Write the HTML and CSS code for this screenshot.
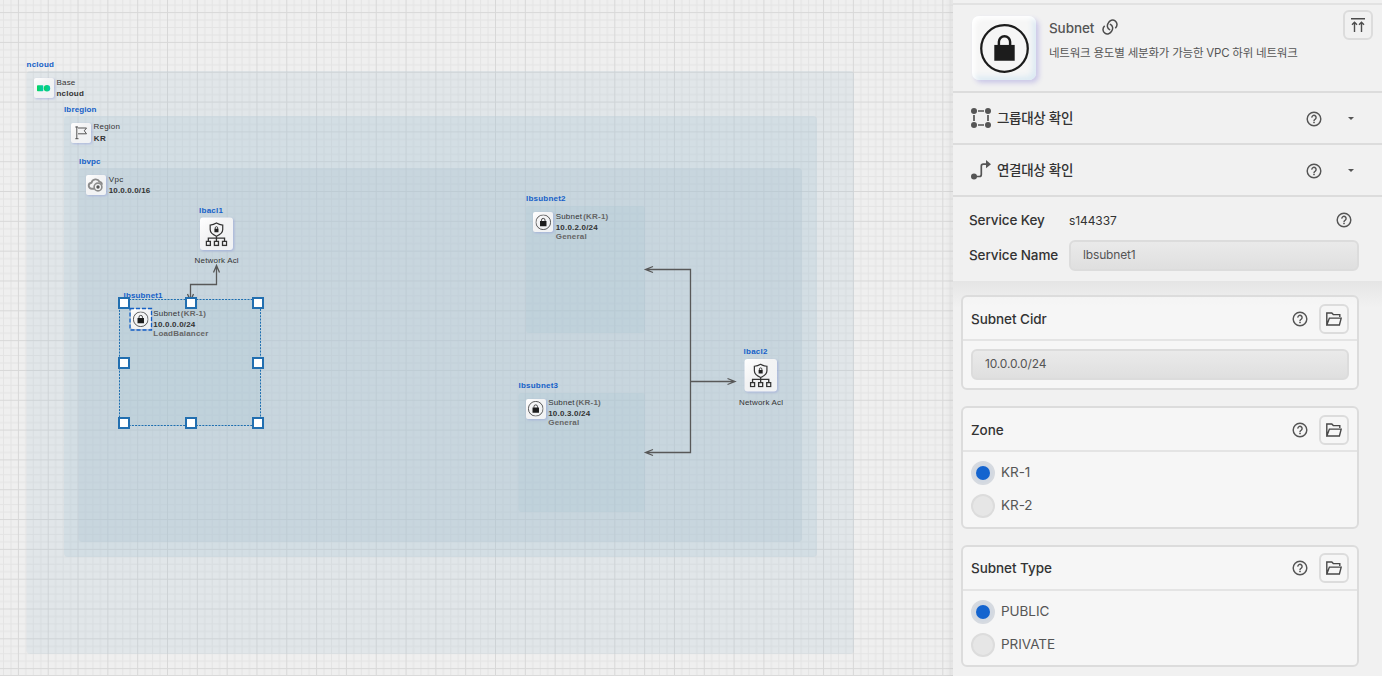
FILE: index.html
```html
<!DOCTYPE html>
<html lang="ko">
<head>
<meta charset="utf-8">
<title>Subnet</title>
<link rel="stylesheet" href="styles.css">
</head>
<body>
<svg width="0" height="0" class="defs">
  <defs>
    <symbol id="help" viewBox="0 0 16 16">
      <circle cx="8" cy="8" r="6.8" fill="none" stroke="#555" stroke-width="1.45"/>
      <path d="M5.9 6.6a2.1 2.1 0 1 1 3.4 1.5C8.500 8.700 8 9 8 9.900" fill="none" stroke="#555" stroke-width="1.45"/>
      <rect x="7.200" y="10.700" width="1.600" height="1.500" fill="#555"/>
    </symbol>
    <symbol id="folder" viewBox="0 0 16 14">
      <path d="M.8 13V1h5l1.500 1.600h6.500V5M.8 13L3.400 6.100H15.200L13.400 13z" fill="none" stroke="#484848" stroke-width="1.400"/>
    </symbol>
    <symbol id="lock" viewBox="0 0 48 48">
      <circle cx="24" cy="24" r="22.800" fill="none" stroke="#1c1c1c" stroke-width="2.200"/>
      <path d="M14 20.500h20V36H14z" fill="#1c1c1c"/>
      <path d="M18.500 21v-3.500a5.500 5.500 0 0 1 11 0V21" fill="none" stroke="#1c1c1c" stroke-width="2.400"/>
    </symbol>
    <symbol id="acl" viewBox="0 0 22 24">
      <path d="M11 1c2 1.300 4 1.900 6.200 2v4.500c0 3-2.200 5-6.200 6.600-4-1.600-6.200-3.600-6.200-6.600V3C7 2.900 9 2.300 11 1z" fill="none" stroke="#333" stroke-width="1.200"/>
      <path d="M9 6.600h4v3.500H9z" fill="#222"/>
      <path d="M9.800 7V5.800a1.200 1.200 0 0 1 2.400 0V7" fill="none" stroke="#222" stroke-width=".8"/>
      <path d="M11 14v5M3 19v-3h16v3M1 19.200h4v4H1zM9 19.200h4v4H9zM17 19.200h4v4h-4z" fill="none" stroke="#333" stroke-width="1.300"/>
    </symbol>
  </defs>
</svg>
<div class="app">
  <main class="canvas">
    <svg width="953" height="676" viewBox="0 0 953 676">
      <defs>
        <pattern id="grid" x="17.900" y="12.100" width="29.820" height="29.820" patternUnits="userSpaceOnUse">
          <path class="minor" d="M7.950 0V29.820M15.400 0V29.820M22.860 0V29.820M0 7.950H29.820M0 15.400H29.820M0 22.860H29.820"/>
          <path class="major" d="M.5 0V29.820M0 .5H29.820"/>
        </pattern>
        <linearGradient id="tile" x2="1" y2="1"><stop offset="0" stop-color="#fff"/><stop offset=".4" stop-color="#f3f3f4"/><stop offset="1" stop-color="#f0f2f4"/></linearGradient>
        <linearGradient id="green"><stop offset="0" stop-color="#05d65b"/><stop offset="1" stop-color="#08c6b2"/></linearGradient>
        <linearGradient id="edge"><stop offset="0" stop-color="#000" stop-opacity="0"/><stop offset="1" stop-color="#000" stop-opacity=".04"/></linearGradient>
      </defs>
      <rect width="953" height="676" fill="#efefef"/>
      <rect width="953" height="676" fill="url(#grid)"/>
      <rect y="675" width="953" height="1" fill="#dadada"/>

      <rect class="base" x="26.500" y="71" width="827.500" height="583" rx="4"/>
      <rect class="region" x="64" y="116" width="753" height="441" rx="4"/>
      <rect class="vpc" x="78.500" y="168" width="723.500" height="374" rx="4"/>
      <rect class="subnet" x="119" y="299" width="142" height="127" rx="2"/>
      <rect class="subnet" x="526" y="206" width="119" height="127" rx="3"/>
      <rect class="subnet" x="518.500" y="393" width="126.500" height="119" rx="3"/>

      <g class="link">
        <path d="M190.500 300V284.500H216.500V266M213.500 272.500L216.500 265.500L219.500 272.500M187.500 294L190.500 301L193.500 294"/>
        <path d="M646 269.500H690.500V452.500H646M690.500 381.500H735M653 266.500L645.500 269.500L653 272.500M653 449.500L645.500 452.500L653 455.500M727.500 378.500L735 381.500L727.500 384.500"/>
      </g>

      <g class="tile">
        <rect x="34" y="78" width="20" height="20" rx="2"/>
        <rect x="71" y="123" width="20" height="20" rx="2"/>
        <rect x="86" y="175" width="20" height="20" rx="2"/>
        <rect x="533" y="212" width="20" height="20" rx="2"/>
        <rect x="526" y="399" width="20" height="20" rx="2"/>
        <rect x="131" y="309" width="20" height="20" rx="2"/>
        <rect x="200" y="217.500" width="33" height="32.500" rx="3"/>
        <rect x="744.500" y="359" width="32.500" height="32.500" rx="3"/>
      </g>
      <rect x="37" y="85.200" width="6.300" height="6" rx=".8" fill="url(#green)"/>
      <circle cx="47" cy="88.200" r="3.200" fill="url(#green)"/>
      <path d="M76.800 126.500V139M75.300 138.700H78.500M75.300 127H78M78 128H86.500L84.300 130.800L86.500 133.800H78" fill="none" stroke="#555" stroke-width="1"/>
      <g fill="none" stroke="#8c8c8c" stroke-width="1.900"><path d="M94 188.700h-2a3 3 0 0 1-.5-6 4.300 4.300 0 0 1 8-1 3.700 3.700 0 0 1 2.700 3"/><circle cx="98" cy="187" r="3.900" stroke-width="1.600"/></g>
      <circle cx="98" cy="187" r="1.700" fill="#555"/>
      <use href="#lock" x="535.500" y="214.500" width="15.500" height="15.500"/>
      <use href="#lock" x="528" y="401" width="15.500" height="15.500"/>
      <use href="#lock" x="133" y="311.500" width="15.500" height="15.500"/>
      <use href="#acl" x="205.300" y="222" width="22.300" height="24.300"/>
      <use href="#acl" x="749.500" y="363.200" width="22.300" height="24.300"/>

      <g class="name">
        <text x="26.500" y="66.800" textLength="27.500">ncloud</text>
        <text x="64" y="111.600" textLength="32.500">lbregion</text>
        <text x="79" y="163.800" textLength="21.500">lbvpc</text>
        <text x="199" y="212.800" textLength="24">lbacl1</text>
        <text x="123.500" y="298" textLength="39">lbsubnet1</text>
        <text x="526" y="200.800" textLength="39.500">lbsubnet2</text>
        <text x="518.500" y="387.900" textLength="39.500">lbsubnet3</text>
        <text x="743.500" y="353.700" textLength="24">lbacl2</text>
      </g>
      <g class="kind">
        <text x="56.500" y="85" textLength="18.800">Base</text>
        <text x="93.500" y="129" textLength="26.500">Region</text>
        <text x="108.700" y="181.800" textLength="14.500">Vpc</text>
        <text x="194.600" y="262.700" textLength="44">Network Acl</text>
        <text x="739" y="404.800" textLength="44">Network Acl</text>
        <text x="153.300" y="316" textLength="52.500">Subnet<tspan class="az" dx="1">(KR-1)</tspan></text>
        <text x="555.700" y="219" textLength="52.500">Subnet<tspan class="az" dx="1">(KR-1)</tspan></text>
        <text x="548.200" y="405" textLength="52.500">Subnet<tspan class="az" dx="1">(KR-1)</tspan></text>
      </g>
      <g class="value">
        <text x="56.500" y="96" textLength="27.300">ncloud</text>
        <text x="93.700" y="140.800" textLength="12">KR</text>
        <text x="108.700" y="193" textLength="41.500">10.0.0.0/16</text>
        <text x="153.300" y="327" textLength="42">10.0.0.0/24</text>
        <text x="555.700" y="230" textLength="42">10.0.2.0/24</text>
        <text x="548.200" y="416" textLength="42">10.0.3.0/24</text>
      </g>
      <g class="use">
        <text x="153.300" y="336" textLength="55">LoadBalancer</text>
        <text x="555.700" y="239" textLength="31">General</text>
        <text x="548.200" y="425" textLength="31">General</text>
      </g>

      <rect x="130" y="308.500" width="21.500" height="21.500" fill="none" stroke="#1560c4" stroke-width="1.300" stroke-dasharray="4 2"/>
      <rect x="119.500" y="299.500" width="141" height="126" fill="none" stroke="#1e6eb0" stroke-width="1" stroke-dasharray="2 1.200"/>
      <g class="handle">
        <rect x="119" y="298" width="10" height="10"/><rect x="186" y="298" width="10" height="10"/><rect x="253" y="298" width="10" height="10"/>
        <rect x="119" y="358" width="10" height="10"/><rect x="253" y="358" width="10" height="10"/>
        <rect x="119" y="418" width="10" height="10"/><rect x="186" y="418" width="10" height="10"/><rect x="253" y="418" width="10" height="10"/>
      </g>
      <rect x="945" width="8" height="676" fill="url(#edge)"/>
    </svg>
  </main>

  <aside class="panel">
    <header class="head">
      <div class="logo"><svg width="49" height="49"><use href="#lock"/></svg></div>
      <div class="about">
        <div class="title">Subnet
          <svg width="16" height="16" viewBox="0 0 16 16" fill="none" stroke="#4c4c4c" stroke-width="1.500" stroke-linecap="round"><path d="M7.600 10.600C5.300 9.400 4.700 6.500 6.200 4.100C7.600 1.300 10.800.2 13.100 1.800C15.400 3.400 15.600 6.600 13.700 8.700"/><path d="M8.400 5.400C10.700 6.600 11.300 9.500 9.800 11.900C8.400 14.700 5.200 15.800 2.900 14.200C.6 12.600.4 9.400 2.300 7.300"/></svg>
        </div>
        <div class="desc">네트워크 용도별 세분화가 가능한 VPC 하위 네트워크</div>
      </div>
      <button class="square"><svg width="14" height="14" viewBox="0 0 14 14" fill="none" stroke="#4c4c4c" stroke-width="1.400"><path d="M0 .7H14M3.500 14V4.500M1 6.800L3.500 4.300L6 6.800M10.500 14V4.500M8 6.800L10.500 4.300L13 6.800"/></svg></button>
    </header>
    <section class="fold">
      <svg width="20" height="20" viewBox="0 0 20 20" fill="#555"><circle cx="3" cy="3" r="3"/><circle cx="17" cy="3" r="3"/><circle cx="3" cy="17" r="3"/><circle cx="17" cy="17" r="3"/><path d="M7 3h6M7 17h6M3 7v6M17 7v6" stroke="#555" stroke-width="1.700"/></svg>
      <span class="fold-name">그룹대상 확인</span>
      <svg class="help" width="16" height="16"><use href="#help"/></svg>
      <i class="caret"></i>
    </section>
    <section class="fold">
      <svg width="20" height="20" viewBox="0 0 20 20" fill="#555"><circle cx="3" cy="16.500" r="3"/><path d="M15 0l5 4.200-5 4z"/><path d="M3 16.500h5.500q1.800 0 1.800-2V6.200q0-2 2-2H16" fill="none" stroke="#555" stroke-width="1.700"/></svg>
      <span class="fold-name">연결대상 확인</span>
      <svg class="help" width="16" height="16"><use href="#help"/></svg>
      <i class="caret"></i>
    </section>
    <section class="service">
      <div class="row key"><span class="label">Service Key</span><span class="key-value">s144337</span><svg class="help" width="16" height="16"><use href="#help"/></svg></div>
      <div class="row"><span class="label">Service Name</span><div class="field">lbsubnet1</div></div>
    </section>
    <div class="cards">
      <section class="card cidr">
        <div class="card-head"><span>Subnet Cidr</span><svg class="help" width="16" height="16"><use href="#help"/></svg><button class="square"><svg width="16" height="14"><use href="#folder"/></svg></button></div>
        <div class="card-body"><div class="field">10.0.0.0/24</div></div>
      </section>
      <section class="card zone">
        <div class="card-head"><span>Zone</span><svg class="help" width="16" height="16"><use href="#help"/></svg><button class="square"><svg width="16" height="14"><use href="#folder"/></svg></button></div>
        <div class="card-body">
          <label class="option"><i class="radio on"></i><span>KR-1</span></label>
          <label class="option"><i class="radio"></i><span>KR-2</span></label>
        </div>
      </section>
      <section class="card type">
        <div class="card-head"><span>Subnet Type</span><svg class="help" width="16" height="16"><use href="#help"/></svg><button class="square"><svg width="16" height="14"><use href="#folder"/></svg></button></div>
        <div class="card-body">
          <label class="option"><i class="radio on"></i><span>PUBLIC</span></label>
          <label class="option"><i class="radio"></i><span>PRIVATE</span></label>
        </div>
      </section>
    </div>
  </aside>
</div>
</body>
</html>
```
FILE: styles.css
```css
* { box-sizing: border-box; }
body { margin: 0; overflow: hidden; font-family: Inter, "Noto Sans CJK KR", sans-serif; color: #333; }
svg { display: block; flex: none; }
.defs { position: absolute; }
.app { display: flex; width: 1382px; height: 676px; }
.canvas { width: 953px; flex: none; }

.minor { stroke: #e4e4e4; stroke-width: 1; fill: none; }
.major { stroke: #d8d8d8; stroke-width: 1; fill: none; }
.base { fill: #a8c1d0; fill-opacity: .2; }
.region { fill: #b0cad9; fill-opacity: .28; }
.vpc { fill: #abc2d1; fill-opacity: .28; }
.subnet { fill: #a2c2d0; fill-opacity: .22; }
.link { fill: none; stroke: #585858; stroke-width: 1.300; }
.tile { fill: url(#tile); filter: drop-shadow(1px 1px 1px rgba(135, 145, 215, .5)); }
.canvas text { font-family: "Liberation Sans", sans-serif; font-size: 8px; fill: #333; }
.canvas .name text { font-weight: bold; fill: #1560c8; }
.canvas .value text { font-weight: bold; }
.canvas .use text { font-weight: bold; fill: #666; }
.az { font-weight: bold; fill: #666; }
.handle { fill: #fff; stroke: #226fb0; stroke-width: 2; }

.panel { width: 429px; flex: none; display: flex; flex-direction: column; background: #f1f1f1; padding-top: 3px; }
.head { display: flex; height: 90px; border-top: 2px solid #e2e2e2; border-bottom: 2px solid #dcdcdc; padding: 11px 9px 0 19px; }
.logo { width: 64px; height: 64px; border-radius: 7px; display: grid; place-items: center; background: #f6f6f6; box-shadow: 3px 3px 5px #cbc8e8, inset 3px 3px 5px #fff, inset -3px -3px 6px #d9e9f3; }
.about { flex: 1; padding: 2px 0 0 13px; }
.title { display: flex; align-items: center; gap: 8px; height: 20px; font-size: 13.5px; font-weight: 500; letter-spacing: -.1px; color: #555; }
.title svg { margin-bottom: 3px; }
.desc { margin-top: 5px; font-size: 11.5px; line-height: 20px; letter-spacing: -.21px; color: #555; white-space: nowrap; }
.square { flex: none; width: 30px; height: 30px; padding: 0; display: grid; place-items: center; border: 2px solid #dcdcdc; border-radius: 6px; background: transparent; }
.head .square { margin-top: -6px; }
.fold { display: flex; align-items: center; height: 52px; border-bottom: 2px solid #dcdcdc; padding: 0 28px 0 18px; }
.fold-name { margin: 0 0 2px 6px; font-size: 13.500px; font-weight: 500; letter-spacing: -.3px; }
.help { margin-left: auto; }
.fold .help, .fold .caret { margin-top: 1px; }
.caret { margin-left: 26px; border: 3.5px solid transparent; border-top: 3.500px solid #555; border-bottom: 0; }
.service { height: 84px; padding: 13px 23px 0 16px; display: flex; flex-direction: column; gap: 10px; }
.row { display: flex; align-items: center; height: 31px; font-size: 13.5px; letter-spacing: -.1px; }
.key { height: 20px; padding-right: 7px; }
.label { width: 100px; flex: none; font-weight: 500; margin-bottom: 1px; }
.key-value { font-size: 12px; letter-spacing: -.1px; }
.field { flex: 1; height: 31px; border: 2px solid #dcdcdc; border-radius: 6px; padding: 0 12px; font-size: 12px; letter-spacing: -.15px; line-height: 25px; color: #555; background: linear-gradient(#eaeaea, #dfdfdf); }
.cards { flex: 1; padding: 14px 23px 0 8px; background: linear-gradient(#e5e5e5, #f1f1f1 26px); display: flex; flex-direction: column; gap: 16px; }
.card { border: 2px solid #dcdcdc; border-radius: 6px; height: 123px; background: rgba(255, 255, 255, .4); flex: none; }
.cidr { height: 95px; }
.type { height: 122px; }
.card-head { display: flex; align-items: center; height: 44px; border-bottom: 2px solid #e4e4e4; padding: 0 8px; font-size: 13.5px; font-weight: 500; letter-spacing: -.05px; }
.cidr .card-head, .zone .card-head { padding-top: 2px; }
.card-head .square { margin-left: 11px; }
.card-body { padding: 9px 8px; display: grid; row-gap: 9px; }
.cidr .card-body { padding-top: 8px; }
.option { display: flex; align-items: center; gap: 6px; height: 24px; font-size: 13.5px; letter-spacing: -.05px; color: #555; }
.option span { margin-bottom: 2px; }
.radio { width: 24px; height: 24px; border-radius: 50%; border: 2px solid #dcdcdc; background: #e6e6e6; display: grid; place-items: center; }
.on { border-color: #d6dae0; background: #d2d8e1; }
.on::after { content: ""; width: 14px; height: 14px; border-radius: 50%; background: #1464cf; }
```
